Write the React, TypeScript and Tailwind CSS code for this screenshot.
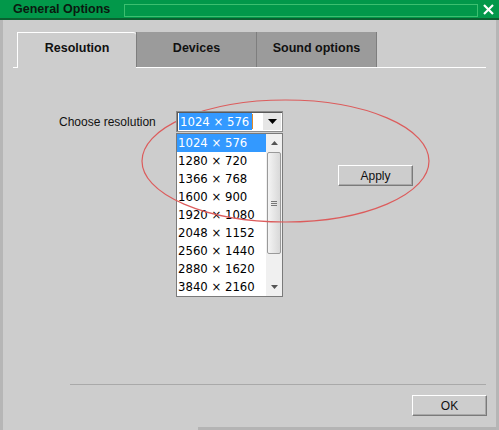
import React from "react";

const resolutions = [
  "1024 × 576",
  "1280 × 720",
  "1366 × 768",
  "1600 × 900",
  "1920 × 1080",
  "2048 × 1152",
  "2560 × 1440",
  "2880 × 1620",
  "3840 × 2160",
];

const listFont = "font-['DejaVu_Sans_Condensed','DejaVu_Sans',sans-serif] [font-stretch:condensed]";

const Button = ({ label, className }: { label: string; className: string }) => (
  <div
    className={`flex h-[21px] w-[75px] items-center justify-center border border-t-white border-l-white border-r-[#7a7a7a] border-b-[#7a7a7a] bg-[#cdcdcd] text-[12px] text-[#111] shadow-[inset_-1px_-1px_0_#a8a8a8] ${className}`}
  >
    {label}
  </div>
);

const App = () => {
  return (
    <div className="relative flex h-[430px] w-[499px] flex-col overflow-hidden bg-[#cdcdcd] font-['Liberation_Sans',Arial,sans-serif] text-black">
      {/* title bar */}
      <div className="flex h-[20px] shrink-0 items-start border-b-2 border-[#0b6030] bg-[#02984a]">
        <span className="w-[111px] pl-[13px] pt-[2px] text-[12.5px] font-bold leading-[14px] text-[#0a1a10]">
          General Options
        </span>
        <div className="mt-[4px] ml-[13px] h-[13px] w-[354px] border border-[#3cbf6f]" />
        <svg width="11" height="11" viewBox="0 0 11 11" className="ml-[5px] mt-[4px]">
          <line x1="1" y1="1" x2="10" y2="10" stroke="#fff" strokeWidth="2.2" />
          <line x1="10" y1="1" x2="1" y2="10" stroke="#fff" strokeWidth="2.2" />
        </svg>
      </div>

      {/* body */}
      <div className="flex flex-1 flex-col border-l-[3px] border-r-[3px] border-[#b6b6b6]">
        {/* tabs */}
        <div className="mt-[12px] ml-[10px] flex h-[36px] w-[473px] items-end border-b border-white pl-[4px]">
          <div className="relative -mb-px flex h-[36px] w-[119px] justify-center rounded-tr-[3px] border-t border-l border-white bg-[#cdcdcd] pt-[6px] text-[12.5px] font-bold text-[#111]">
            Resolution
          </div>
          <div className="flex h-[35px] w-[120px] justify-center border-l border-[#7e7e7e] bg-[#9b9b9b] pt-[7px] text-[12.5px] font-bold text-[#111]">
            Devices
          </div>
          <div className="flex h-[35px] w-[121px] justify-center border-x border-[#7e7e7e] bg-[#9b9b9b] pt-[7px] text-[12.5px] font-bold text-[#111]">
            Sound options
          </div>
        </div>

        {/* resolution row */}
        <div className="mt-[43px] flex h-[21px] items-center pl-[56px]">
          <span className="w-[117px] text-[12px] text-[#111]">Choose resolution</span>
          <div className="relative h-[21px] w-[107px]">
            <div className="relative z-20 flex h-[21px] w-[107px] items-center border border-[#8c8c8c] bg-white pl-[1px] shadow-[inset_1px_1px_0_#5a5a5a]">
              <span className={`ml-[1px] flex h-[17px] w-[73px] items-center bg-[#3399ff] pl-[1px] text-[13px] leading-[17px] text-white ${listFont}`}>
                1024 × 576
              </span>
              <span className="h-[15px] w-px bg-[#e08a2a]" />
              <div className="ml-auto mr-[1px] flex h-[17px] w-[18px] items-center justify-center bg-[#e6e6e6]">
                <svg width="9" height="5" viewBox="0 0 9 5">
                  <polygon points="0,0 9,0 4.5,5" fill="#000" />
                </svg>
              </div>
            </div>

            {/* open list */}
            <div className="absolute left-0 top-[22px] z-0 flex h-[164px] w-[107px] border border-[#7a7a7a] bg-white">
              <div className={`flex flex-1 flex-col ${listFont}`}>
                {resolutions.map((r, i) => (
                  <div
                    key={r}
                    className={`flex h-[18px] items-center pl-[1px] text-[13px] leading-[18px] ${
                      i === 0 ? "bg-[#3399ff] text-white" : "text-black"
                    }`}
                  >
                    {r}
                  </div>
                ))}
              </div>
              <div className="flex w-[16px] flex-col bg-[#f0f0f0]">
                <div className="flex h-[18px] items-center justify-center">
                  <svg width="7" height="4" viewBox="0 0 7 4">
                    <polygon points="0,4 7,4 3.5,0" fill="#555" />
                  </svg>
                </div>
                <div className="mx-px flex h-[102px] items-center justify-center rounded-[2px] border border-[#9a9a9a] bg-gradient-to-r from-[#f4f4f4] to-[#d9d9d9]">
                  <div className="flex flex-col gap-[1px]">
                    <span className="h-px w-[6px] bg-[#777]" />
                    <span className="h-px w-[6px] bg-[#777]" />
                    <span className="h-px w-[6px] bg-[#777]" />
                  </div>
                </div>
                <div className="mt-auto flex h-[18px] items-center justify-center">
                  <svg width="7" height="4" viewBox="0 0 7 4">
                    <polygon points="0,0 7,0 3.5,4" fill="#555" />
                  </svg>
                </div>
              </div>
            </div>
          </div>
        </div>

        <Button label="Apply" className="mt-[33px] ml-[335px]" />

        <div className="mt-[198px] ml-[67px] h-px w-[416px] bg-[#a9a9a9]" />

        <Button label="OK" className="mt-[10px] ml-[409px]" />

        <div className="mt-auto ml-[195px] h-[3px] bg-[#b4b4b4]" />
      </div>

      {/* red marker ellipse */}
      <svg
        className="pointer-events-none absolute left-0 top-0 z-10"
        width="499"
        height="430"
        viewBox="0 0 499 430"
      >
        <ellipse cx="285.5" cy="161" rx="143.5" ry="61" fill="none" stroke="#dc5c5c" strokeWidth="1.2" />
      </svg>
    </div>
  );
};

export default App;
